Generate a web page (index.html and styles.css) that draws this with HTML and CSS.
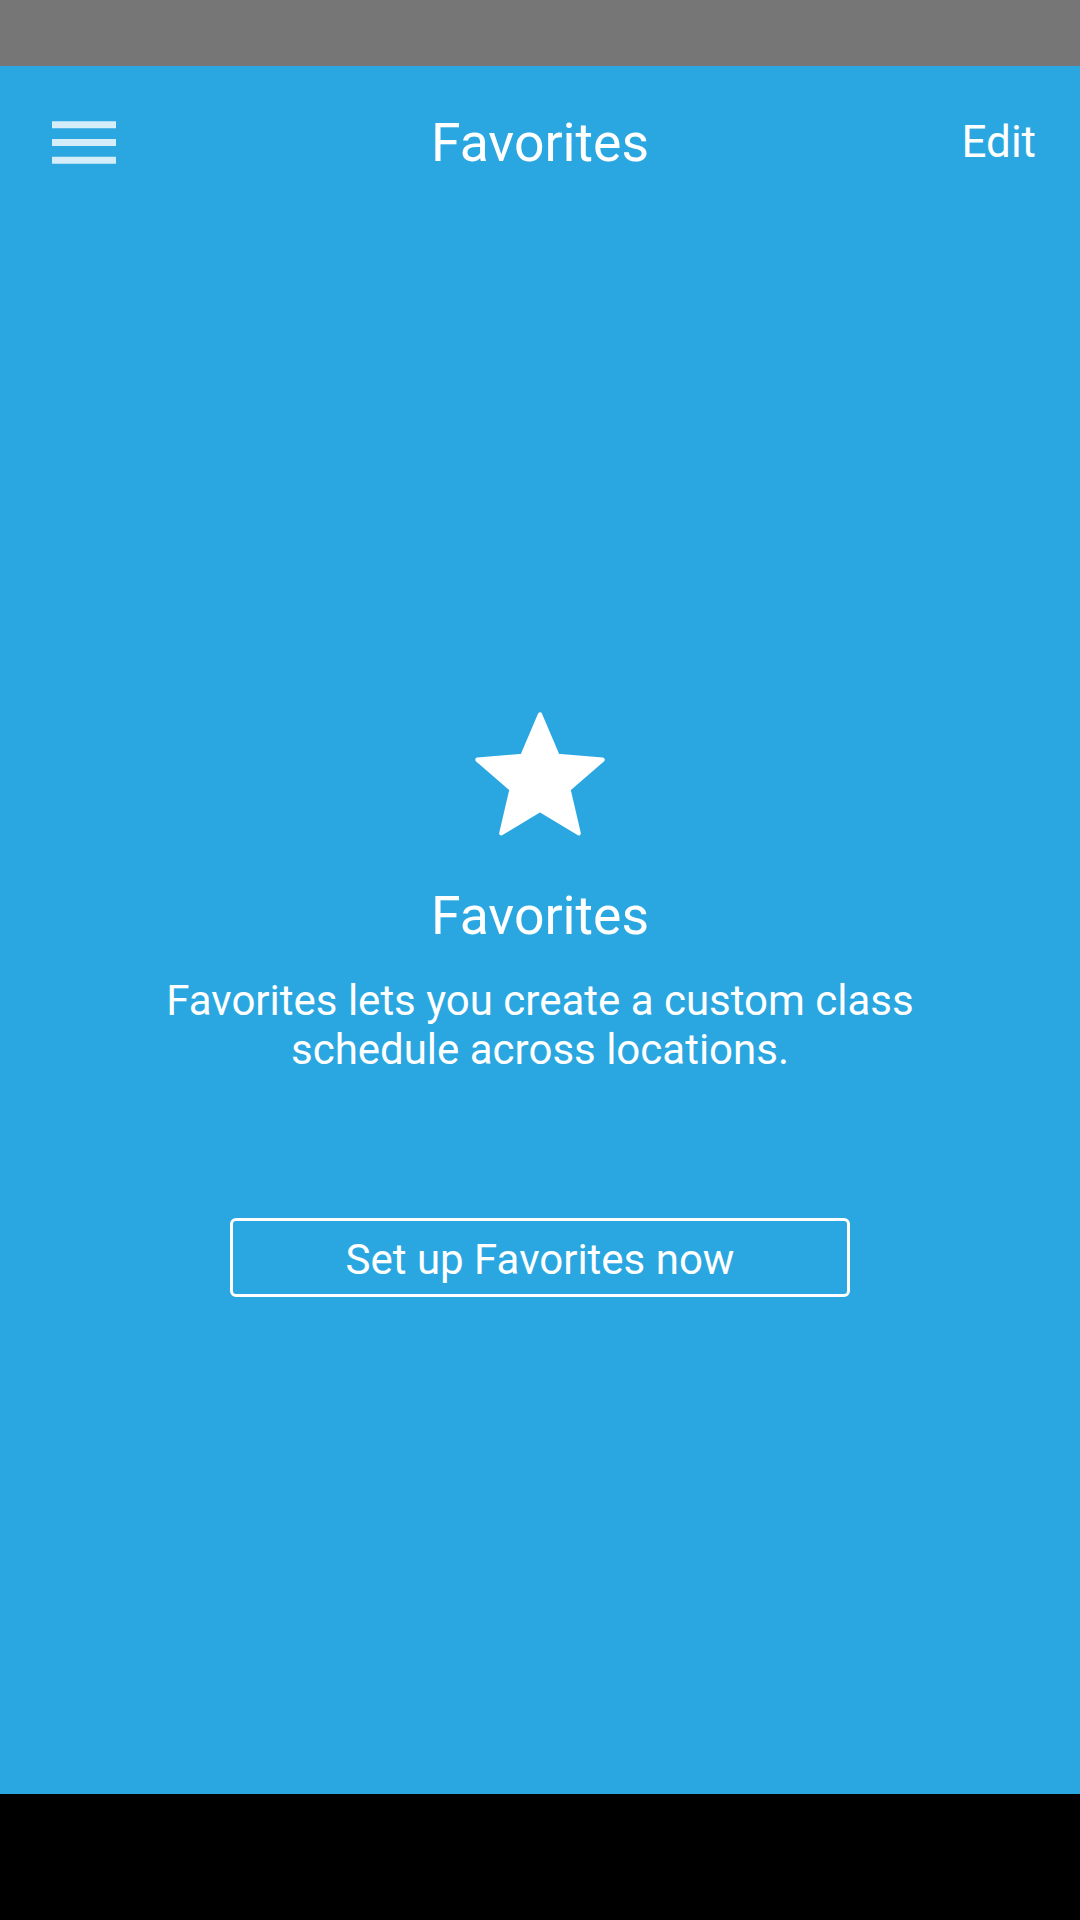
FILE: index.html
```html
<!DOCTYPE html>
<html lang="en">
<head>
<meta charset="UTF-8" />
<title>Favorites</title>
<link rel="stylesheet" href="styles.css">
</head>
<body>

<div class="status-bar"></div>

<div class="app">
  <header class="toolbar">
    <button class="menu-btn" aria-label="Menu">
      <svg class="menu-icon" viewBox="3 6 18 12" width="64" height="43">
        <path d="M3 18h18v-2H3v2zm0-5h18v-2H3v2zm0-7v2h18V6H3z" fill="#fff" />
      </svg>
    </button>
    <h1 class="title">Favorites</h1>
    <button class="edit-btn">Edit</button>
  </header>

  <main class="empty">
    <svg class="star" viewBox="0 0 24 24" width="150" height="150">
      <path d="M12 17.27L18.18 21l-1.64-7.03L22 9.24l-7.19-.61L12 2 9.19 8.63 2 9.24l5.46 4.73L5.82 21z"
            fill="#fff" stroke="#fff" stroke-width="0.7" stroke-linejoin="round" />
    </svg>
    <h2 class="empty-title">Favorites</h2>
    <p class="empty-text">Favorites lets you create a custom class schedule across locations.</p>
    <button class="setup-btn">Set up Favorites now</button>
  </main>
</div>

<div class="nav-bar"></div>

</body>
</html>
```

FILE: styles.css
```css
html, body {
  margin: 0;
  padding: 0;
}
body {
  width: 1080px;
  height: 1920px;
  display: flex;
  flex-direction: column;
  font-family: Roboto, "Liberation Sans", sans-serif;
  color: #fff;
  background: #2aa7e0;
}
.status-bar {
  height: 66px;
  background: #767676;
}
.app {
  flex: 1;
  background: #2aa7e0;
  display: flex;
  flex-direction: column;
}
.nav-bar {
  height: 126px;
  background: #000;
}

.toolbar {
  height: 152px;
  display: grid;
  grid-template-columns: 1fr auto 1fr;
  align-items: center;
  padding: 0 44px;
}
.toolbar button {
  background: none;
  border: none;
  padding: 0;
  color: #fff;
  font-family: inherit;
  cursor: pointer;
}
.menu-btn {
  justify-self: start;
  display: flex;
  margin-left: 8px;
  opacity: 0.8;
}
.title {
  margin: 0;
  font-size: 53.5px;
  font-weight: 400;
  line-height: normal;
}
.edit-btn {
  justify-self: end;
  font-size: 44px;
  line-height: normal;
}

.empty {
  display: flex;
  flex-direction: column;
  align-items: center;
  text-align: center;
}
.star {
  display: block;
  margin-top: 484px;
}
.empty-title {
  margin: 33px 0 0;
  font-size: 53.5px;
  font-weight: 400;
  line-height: 61px;
}
.empty-text {
  margin: 30px 0 0;
  max-width: 800px;
  font-size: 42px;
  line-height: 49px;
}
.setup-btn {
  margin-top: 144px;
  width: 620px;
  height: 79px;
  box-sizing: border-box;
  border: 3px solid #fff;
  border-radius: 6px;
  background: transparent;
  color: #fff;
  font-family: inherit;
  font-size: 42px;
  line-height: 49px;
  padding: 3px 0 0;
  cursor: pointer;
}
```
